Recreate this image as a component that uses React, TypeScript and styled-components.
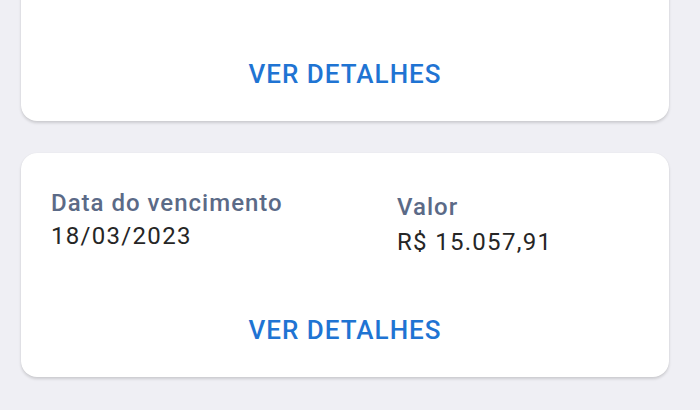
import React from 'react';
import styled, { createGlobalStyle } from 'styled-components';

type Bill = {
  dueDate: string;
  amount: string;
};

const bills: Bill[] = [
  { dueDate: '18/02/2023', amount: 'R$ 846,20' },
  { dueDate: '18/03/2023', amount: 'R$ 15.057,91' },
];

export default function App(): JSX.Element {
  return (
    <>
      <GlobalStyle />
      <Page>
        <List>
          {bills.map((bill) => (
            <BillCard key={bill.dueDate} bill={bill} />
          ))}
        </List>
      </Page>
    </>
  );
}

function BillCard({ bill }: { bill: Bill }): JSX.Element {
  return (
    <Card>
      <InfoGrid>
        <Field>
          <Label>Data do vencimento</Label>
          <Value>{bill.dueDate}</Value>
        </Field>
        <Field $shift={4} $gap={9}>
          <Label>Valor</Label>
          <Value>{bill.amount}</Value>
        </Field>
      </InfoGrid>
      <DetailsButton type="button">Ver detalhes</DetailsButton>
    </Card>
  );
}

const GlobalStyle = createGlobalStyle`
  html, body {
    margin: 0;
    padding: 0;
    background: #efeff4;
    font-family: Roboto, "Noto Sans", sans-serif;
  }
`;

const Page = styled.main`
  width: 700px;
  height: 410px;
  overflow: hidden;
  background: #efeff4;
  padding: 0 31px 0 21px;
  box-sizing: border-box;
`;

const List = styled.div`
  display: flex;
  flex-direction: column;
  gap: 32px;
  margin-top: -103px;
`;

const Card = styled.article`
  height: 224px;
  box-sizing: border-box;
  background: #ffffff;
  border-radius: 16px;
  box-shadow: 0 2px 3px rgba(0, 0, 0, 0.15), 0 0 1px rgba(0, 0, 0, 0.08);
  padding: 37px 30px 32px;
  display: flex;
  flex-direction: column;
`;

const InfoGrid = styled.div`
  display: grid;
  grid-template-columns: 346px 1fr;
  align-items: start;
`;

const Field = styled.div<{ $shift?: number; $gap?: number }>`
  display: flex;
  flex-direction: column;
  gap: ${(p) => p.$gap ?? 7}px;
  padding-top: ${(p) => p.$shift ?? 0}px;
`;

const Label = styled.span`
  font-size: 24px;
  line-height: 26px;
  font-weight: 500;
  letter-spacing: 1px;
  color: #5b6a87;
`;

const Value = styled.span`
  font-size: 24px;
  line-height: 26px;
  font-weight: 400;
  letter-spacing: 1.3px;
  color: #262626;
`;

const DetailsButton = styled.button`
  margin-top: auto;
  align-self: center;
  border: none;
  background: transparent;
  padding: 0;
  font-family: inherit;
  font-size: 26px;
  line-height: 30px;
  font-weight: 500;
  letter-spacing: 1px;
  text-transform: uppercase;
  color: #1f74d3;
`;
